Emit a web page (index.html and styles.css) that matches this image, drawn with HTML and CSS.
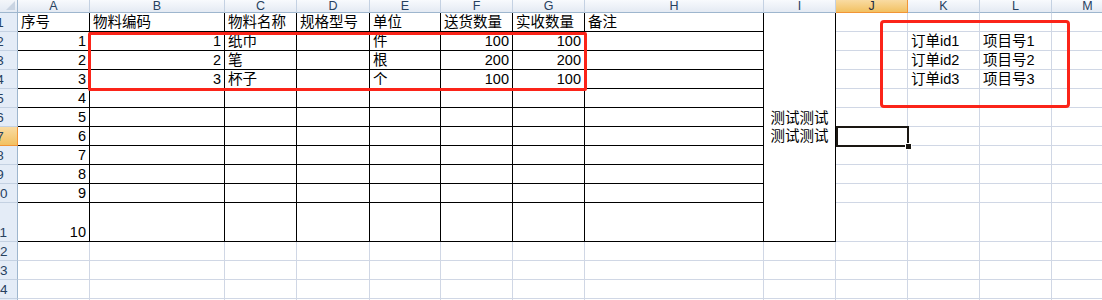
FILE: index.html
```html
<!DOCTYPE html>
<html lang="zh">
<head>
<meta charset="utf-8">
<title>Sheet</title>
<link rel="stylesheet" href="styles.css">
</head>
<body>
<div class="sheet">
  <div class="grid">
    <!-- header row -->
    <div class="corner"><span class="tri"></span></div>
    <div class="ch">A</div><div class="ch">B</div><div class="ch">C</div><div class="ch">D</div><div class="ch">E</div><div class="ch">F</div><div class="ch">G</div><div class="ch">H</div><div class="ch">I</div><div class="ch on">J</div><div class="ch">K</div><div class="ch">L</div><div class="ch">M</div>

    <!-- row 1 -->
    <div class="rh"><span>1</span></div>
    <div class="c k">序号</div><div class="c k">物料编码</div><div class="c k">物料名称</div><div class="c k">规格型号</div><div class="c k">单位</div><div class="c k">送货数量</div><div class="c k">实收数量</div><div class="c k">备注</div>
    <div class="c k merged"><span>测试测试<br>测试测试</span></div>
    <div class="c"></div><div class="c"></div><div class="c"></div><div class="c"></div>

    <!-- row 2 -->
    <div class="rh"><span>2</span></div>
    <div class="c k r">1</div><div class="c k r">1</div><div class="c k">纸巾</div><div class="c k"></div><div class="c k">件</div><div class="c k r">100</div><div class="c k r">100</div><div class="c k"></div>
    <div class="c"></div><div class="c">订单id1</div><div class="c">项目号1</div><div class="c"></div>

    <!-- row 3 -->
    <div class="rh"><span>3</span></div>
    <div class="c k r">2</div><div class="c k r">2</div><div class="c k">笔</div><div class="c k"></div><div class="c k">根</div><div class="c k r">200</div><div class="c k r">200</div><div class="c k"></div>
    <div class="c"></div><div class="c">订单id2</div><div class="c">项目号2</div><div class="c"></div>

    <!-- row 4 -->
    <div class="rh"><span>4</span></div>
    <div class="c k r">3</div><div class="c k r">3</div><div class="c k">杯子</div><div class="c k"></div><div class="c k">个</div><div class="c k r">100</div><div class="c k r">100</div><div class="c k"></div>
    <div class="c"></div><div class="c">订单id3</div><div class="c">项目号3</div><div class="c"></div>

    <!-- row 5 -->
    <div class="rh"><span>5</span></div>
    <div class="c k r">4</div><div class="c k"></div><div class="c k"></div><div class="c k"></div><div class="c k"></div><div class="c k"></div><div class="c k"></div><div class="c k"></div>
    <div class="c"></div><div class="c"></div><div class="c"></div><div class="c"></div>

    <!-- row 6 -->
    <div class="rh"><span>6</span></div>
    <div class="c k r">5</div><div class="c k"></div><div class="c k"></div><div class="c k"></div><div class="c k"></div><div class="c k"></div><div class="c k"></div><div class="c k"></div>
    <div class="c"></div><div class="c"></div><div class="c"></div><div class="c"></div>

    <!-- row 7 -->
    <div class="rh on"><span>7</span></div>
    <div class="c k r">6</div><div class="c k"></div><div class="c k"></div><div class="c k"></div><div class="c k"></div><div class="c k"></div><div class="c k"></div><div class="c k"></div>
    <div class="c"></div><div class="c"></div><div class="c"></div><div class="c"></div>

    <!-- row 8 -->
    <div class="rh"><span>8</span></div>
    <div class="c k r">7</div><div class="c k"></div><div class="c k"></div><div class="c k"></div><div class="c k"></div><div class="c k"></div><div class="c k"></div><div class="c k"></div>
    <div class="c"></div><div class="c"></div><div class="c"></div><div class="c"></div>

    <!-- row 9 -->
    <div class="rh"><span>9</span></div>
    <div class="c k r">8</div><div class="c k"></div><div class="c k"></div><div class="c k"></div><div class="c k"></div><div class="c k"></div><div class="c k"></div><div class="c k"></div>
    <div class="c"></div><div class="c"></div><div class="c"></div><div class="c"></div>

    <!-- row 10 -->
    <div class="rh"><span>10</span></div>
    <div class="c k r">9</div><div class="c k"></div><div class="c k"></div><div class="c k"></div><div class="c k"></div><div class="c k"></div><div class="c k"></div><div class="c k"></div>
    <div class="c"></div><div class="c"></div><div class="c"></div><div class="c"></div>

    <!-- row 11 -->
    <div class="rh"><span>11</span></div>
    <div class="c k r">10</div><div class="c k"></div><div class="c k"></div><div class="c k"></div><div class="c k"></div><div class="c k"></div><div class="c k"></div><div class="c k"></div>
    <div class="c"></div><div class="c"></div><div class="c"></div><div class="c"></div>

    <!-- row 12 -->
    <div class="rh"><span>12</span></div>
    <div class="c"></div><div class="c"></div><div class="c"></div><div class="c"></div><div class="c"></div><div class="c"></div><div class="c"></div><div class="c"></div><div class="c"></div><div class="c"></div><div class="c"></div><div class="c"></div><div class="c"></div>

    <!-- row 13 -->
    <div class="rh"><span>13</span></div>
    <div class="c"></div><div class="c"></div><div class="c"></div><div class="c"></div><div class="c"></div><div class="c"></div><div class="c"></div><div class="c"></div><div class="c"></div><div class="c"></div><div class="c"></div><div class="c"></div><div class="c"></div>

    <!-- row 14 -->
    <div class="rh"><span>14</span></div>
    <div class="c"></div><div class="c"></div><div class="c"></div><div class="c"></div><div class="c"></div><div class="c"></div><div class="c"></div><div class="c"></div><div class="c"></div><div class="c"></div><div class="c"></div><div class="c"></div><div class="c"></div>

    <!-- row 15 -->
    <div class="rh"><span>15</span></div>
    <div class="c"></div><div class="c"></div><div class="c"></div><div class="c"></div><div class="c"></div><div class="c"></div><div class="c"></div><div class="c"></div><div class="c"></div><div class="c"></div><div class="c"></div><div class="c"></div><div class="c"></div>
  </div>

  <div class="mark mark-table"></div>
  <div class="mark mark-side"></div>
  <div class="selection"><span class="handle"></span></div>
</div>
</body>
</html>
```

FILE: styles.css
```css
html, body {
  margin: 0;
  padding: 0;
  background: #ffffff;
}

body {
  width: 1102px;
  height: 300px;
  overflow: hidden;
  font-family: "Liberation Sans", "Noto Sans CJK SC", sans-serif;
  font-size: 14.5px;
  color: #000000;
}

.sheet {
  position: relative;
  width: 1102px;
  height: 300px;
  overflow: hidden;
}

.grid {
  display: grid;
  grid-template-columns: 18px 72px 135px 72px 73px 71px 72px 72px 179px 72px 72px 72px 72px 72px;
  grid-template-rows: 13px repeat(10, 19px) 39px repeat(4, 19px);
}

.grid > div {
  box-sizing: border-box;
  overflow: hidden;
  white-space: nowrap;
}

/* top-left corner */
.corner {
  position: relative;
  background: linear-gradient(#f3f6fa, #e2e9f3);
  border-right: 1px solid #9eb6ce;
  border-bottom: 1px solid #9eb6ce;
}

.tri {
  position: absolute;
  right: 2px;
  bottom: 2px;
  width: 0;
  height: 0;
  border-left: 9px solid transparent;
  border-bottom: 9px solid #c9d4e2;
}

/* column headers */
.ch {
  background: linear-gradient(#f8fafd, #e4eaf3);
  border-right: 1px solid #c4d1e2;
  border-bottom: 1px solid #9eb6ce;
  color: #27415f;
  font-size: 12.5px;
  line-height: 12px;
  text-align: center;
}

.ch.on {
  background: linear-gradient(#f9dba2, #f2c162);
  border-right-color: #f29536;
  border-bottom-color: #f29536;
  color: #1f2c3d;
}

/* row headers */
.rh {
  background: #e4ecf7;
  border-right: 1px solid #9eb6ce;
  border-bottom: 1px solid #c4d1e2;
  color: #27415f;
  font-size: 13.5px;
  display: flex;
  align-items: flex-end;
}

.rh span {
  display: block;
  flex: none;
  width: 36px;
  margin-left: -18px;
  text-align: center;
  line-height: 17px;
}

.rh.on {
  background: linear-gradient(#f9dba2, #f2c162);
  border-right-color: #f29536;
  border-bottom-color: #f29536;
}

/* body cells */
.c {
  border-right: 1px solid #d0d7e5;
  border-bottom: 1px solid #d0d7e5;
  padding: 0 3px;
  line-height: 17px;
  display: flex;
  align-items: flex-end;
}

.c.k {
  border-right-color: #000000;
  border-bottom-color: #000000;
}

.c.r {
  justify-content: flex-end;
}

.c.merged {
  grid-column: 10;
  grid-row: 2 / 13;
  align-items: center;
  justify-content: center;
  text-align: center;
  line-height: 18px;
  padding: 0;
}

/* overlays */
.mark {
  position: absolute;
  box-sizing: border-box;
  border: 3px solid #fb2419;
}

.mark-table {
  left: 88px;
  top: 32px;
  width: 499px;
  height: 59px;
  border-radius: 2px;
}

.mark-side {
  left: 880px;
  top: 20px;
  width: 190px;
  height: 88px;
  border-radius: 4px;
}

.selection {
  position: absolute;
  box-sizing: border-box;
  left: 836px;
  top: 126px;
  width: 73px;
  height: 21px;
  border: 2px solid #1a1712;
}

.handle {
  position: absolute;
  right: -5px;
  bottom: -5px;
  width: 5px;
  height: 5px;
  background: #1a1712;
  border: 1px solid #ffffff;
}
```
